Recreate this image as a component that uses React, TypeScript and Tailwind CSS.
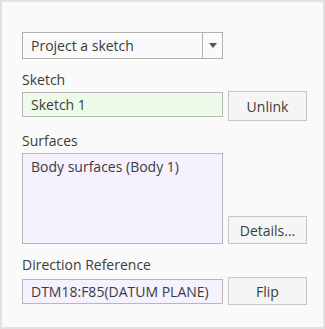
import React from 'react';

const FONT = "font-['Open_Sans','Noto_Sans',sans-serif]";

function Label({ children, className = '' }: { children: React.ReactNode; className?: string }) {
  return <div className={`h-[20px] text-[14px] leading-[20px] text-[#3c3c3c] ${className}`}>{children}</div>;
}

function Button({ children, className = '' }: { children: React.ReactNode; className?: string }) {
  return (
    <button
      className={`w-[79px] border border-[#c6c6c6] bg-[#f5f5f5] text-[14px] text-[#3c3c3c] flex items-center justify-center ${className}`}
    >
      {children}
    </button>
  );
}

export default function App() {
  return (
    <div className={`${FONT} w-[325px] h-[329px] bg-[#fafafa] border-2 border-[#e2e2e2] pl-[20px] pt-[30px]`}>
      {/* mode selector */}
      <div className="w-[201px] h-[27px] border border-[#b0b0b0] bg-[#fafafa] flex items-center">
        <span className="flex-1 pl-[8px] text-[14px] text-[#3c3c3c]">Project a sketch</span>
        <span className="w-[20px] h-full border-l border-[#b0b0b0] flex items-center justify-center">
          <span className="w-0 h-0 border-l-[4px] border-r-[4px] border-t-[5px] border-l-transparent border-r-transparent border-t-[#555]" />
        </span>
      </div>

      <Label className="mt-[11px] mb-[1px]">Sketch</Label>
      <div className="flex items-start">
        <div className="w-[201px] h-[25px] mt-[1px] border border-[#b8b8b8] bg-[#eefbe8] pl-[8px] text-[14px] leading-[23px] text-[#3c3c3c]">
          Sketch 1
        </div>
        <Button className="ml-[5px] h-[30px]">Unlink</Button>
      </div>

      <Label className="mt-[10px] mb-[2px]">Surfaces</Label>
      <div className="flex items-end">
        <div className="w-[201px] h-[91px] border border-[#b8b8b8] bg-[#f5f1ff] pl-[8px] pt-[3px] text-[14px] leading-[20px] text-[#3c3c3c]">
          Body surfaces (Body 1)
        </div>
        <Button className="ml-[5px] h-[28px]">Details...</Button>
      </div>

      <Label className="mt-[11px] mb-[2px]">Direction Reference</Label>
      <div className="flex items-start">
        <div className="w-[201px] h-[25px] mt-[2px] border border-[#b8b8b8] bg-[#f5f1ff] pl-[8px] text-[14px] leading-[23px] text-[#3c3c3c] whitespace-nowrap">
          DTM18:F85(DATUM PLANE)
        </div>
        <Button className="ml-[5px] h-[28px]">Flip</Button>
      </div>
    </div>
  );
}
